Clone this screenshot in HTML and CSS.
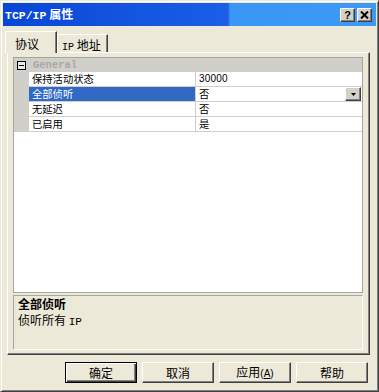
FILE: index.html
```html
<!DOCTYPE html>
<html>
<head>
<meta charset="utf-8">
<title>TCP/IP 属性</title>
<link rel="stylesheet" href="styles.css">
</head>
<body>
<div class="window">
  <div class="titlebar">
    <span class="title"><span class="lat">TCP/IP</span> 属性</span>
    <div class="tbtns">
      <span class="tbtn help">?</span>
      <span class="tbtn close"><svg width="9" height="8" viewBox="0 0 9 8"><path d="M1 0.5 L8 7.5 M8 0.5 L1 7.5" stroke="#000" stroke-width="2" fill="none"/></svg></span>
    </div>
  </div>
  <div class="body">
    <div class="tabs">
      <div class="tab active">协议</div>
      <div class="tab"><span class="lat tablat">IP</span> 地址</div>
    </div>
    <div class="panel">
      <div class="grid">
        <div class="ghead"><span class="minus"><span class="bar"></span></span><span class="gtitle">General</span></div>
        <div class="row"><div class="gut"></div><div class="name">保持活动状态</div><div class="val num">30000</div></div>
        <div class="row sel"><div class="gut"></div><div class="name">全部侦听</div><div class="val">否<span class="drop"><svg width="5" height="3" viewBox="0 0 5 3"><path d="M0 0 H5 L2.5 3 Z" fill="#000"/></svg></span></div></div>
        <div class="row"><div class="gut"></div><div class="name">无延迟</div><div class="val">否</div></div>
        <div class="row"><div class="gut"></div><div class="name">已启用</div><div class="val">是</div></div>
      </div>
      <div class="desc">
        <div class="dtitle">全部侦听</div>
        <div class="dtext">侦听所有 <span class="lat">IP</span></div>
      </div>
    </div>
    <div class="buttons">
      <div class="btn default"><span class="btn-in">确定</span></div>
      <div class="btn"><span class="btn-in">取消</span></div>
      <div class="btn"><span class="btn-in">应用<span class="acc">(<u>A</u>)</span></span></div>
      <div class="btn"><span class="btn-in">帮助</span></div>
    </div>
  </div>
</div>
</body>
</html>
```
FILE: styles.css
```css
* { box-sizing: border-box; }
html, body { margin: 0; padding: 0; }
body {
  width: 379px;
  height: 392px;
  overflow: hidden;
  background: #ece9d8;
  font-family: "Noto Sans CJK SC", "Liberation Sans", sans-serif;
  font-size: 12px;
  color: #000;
}
.lat { font-family: "Liberation Mono", monospace; }

.window {
  width: 379px;
  height: 392px;
  background: #ece9d8;
  border: 1px solid;
  border-color: #ece9d8 #404040 #404040 #ece9d8;
  box-shadow: inset 1px 1px #ffffff, inset -1px -1px #808080;
  padding: 2px;
  display: flex;
  flex-direction: column;
}

.titlebar {
  height: 23px;
  display: flex;
  align-items: center;
  padding-left: 2px;
  background: linear-gradient(to right, #0847d6 0, #1c5ee8 225px, #3a96f4 227px, #3d99f6 100%);
  color: #fff;
}
.title {
  font-weight: bold;
  font-size: 12px;
  line-height: 14px;
  white-space: pre;
}
.title .lat { font-size: 11.5px; font-weight: bold; }
.tbtns {
  margin-left: auto;
  margin-right: 4px;
  display: flex;
  gap: 2px;
  margin-top: 1px;
}
.tbtn {
  width: 15px;
  height: 14px;
  background: #d4d0c8;
  border: 1px solid;
  border-color: #ffffff #404040 #404040 #ffffff;
  box-shadow: inset -1px -1px #808080;
  display: flex;
  align-items: center;
  justify-content: center;
  font-family: "Liberation Sans", sans-serif;
  font-weight: bold;
  font-size: 11px;
  line-height: 11px;
  color: #000;
}

.body {
  flex: 1;
  padding: 0 6px 0 4px;
  display: flex;
  flex-direction: column;
}

.tabs {
  height: 26px;
  display: flex;
  align-items: flex-end;
}
.tab {
  height: 18px;
  width: 51px;
  border: 1px solid;
  border-bottom: none;
  border-color: #ffffff #404040 transparent #ffffff;
  box-shadow: inset -1px 0 #808080;
  padding-left: 4px;
  padding-top: 3px;
  line-height: 14px;
  font-size: 12px;
  white-space: pre;
}
.tab.active {
  height: 22px;
  width: 52px;
  margin-left: -2px;
  margin-bottom: -1px;
  padding-left: 9px;
  padding-top: 5px;
  background: #ece9d8;
  position: relative;
  z-index: 1;
}
.tablat { font-size: 10px; }

.panel {
  height: 303px;
  border: 1px solid;
  border-color: #ffffff #404040 #404040 #ffffff;
  box-shadow: inset -1px -1px #808080;
  padding: 4px 6px 3px 5px;
  display: flex;
  flex-direction: column;
  gap: 2px;
}

.grid {
  height: 236px;
  border: 1px solid #a6a6a0;
  background: #ffffff;
  font-size: 10.3px;
}
.ghead {
  height: 14px;
  background: #d0cfca;
  display: flex;
  align-items: center;
  padding-left: 3px;
}
.minus {
  width: 9px;
  height: 9px;
  border: 1px solid #000;
  background: #e8e8e8;
  display: flex;
  align-items: center;
  justify-content: center;
}
.minus .bar { width: 5px; height: 1px; background: #000; }
.gtitle {
  margin-left: 7px;
  font-family: "Liberation Mono", monospace;
  font-weight: bold;
  font-size: 10.5px;
  color: #a8a8a4;
  line-height: 12px;
}
.row {
  height: 15px;
  display: flex;
}
.gut {
  width: 15px;
  background: #d0cfca;
}
.name {
  width: 167px;
  border-right: 1px solid #d0cfca;
  border-bottom: 1px solid #d0cfca;
  padding-left: 3px;
  line-height: 14px;
  white-space: nowrap;
}
.val {
  flex: 1;
  border-bottom: 1px solid #d0cfca;
  padding-left: 3px;
  line-height: 14px;
  position: relative;
}
.val.num {
  font-family: "Liberation Sans", sans-serif;
  font-size: 10px;
  letter-spacing: 0.2px;
}
.sel .name {
  background: #316ac5;
  color: #ffffff;
}
.drop {
  position: absolute;
  right: 1px;
  top: 0;
  width: 16px;
  height: 14px;
  background: #d4d0c8;
  border: 1px solid;
  border-color: #ffffff #404040 #404040 #ffffff;
  box-shadow: inset -1px -1px #808080;
  display: flex;
  align-items: center;
  justify-content: center;
}

.desc {
  height: 55px;
  border: 1px solid;
  border-color: #a6a6a0 #ffffff #ffffff #a6a6a0;
  padding: 0 4px;
  line-height: 16px;
  font-size: 12px;
}
.dtitle { font-weight: bold; }
.dtext .lat { font-size: 11px; }

.buttons {
  margin-top: 7px;
  height: 21px;
  display: flex;
  justify-content: flex-end;
  gap: 5px;
  padding-right: 2px;
}
.btn {
  width: 72px;
  height: 21px;
  border: 1px solid;
  border-color: #ffffff #404040 #404040 #ffffff;
  box-shadow: inset -1px -1px #808080;
  display: flex;
  align-items: center;
  justify-content: center;
  font-size: 12px;
  line-height: 14px;
  background: #ece9d8;
}
.btn.default {
  border: 1px solid #000;
  box-shadow: inset 1px 1px #ffffff, inset -1px -1px #404040, inset -2px -2px #808080;
}
.acc {
  font-family: "Liberation Sans", sans-serif;
  font-size: 10px;
}
```
